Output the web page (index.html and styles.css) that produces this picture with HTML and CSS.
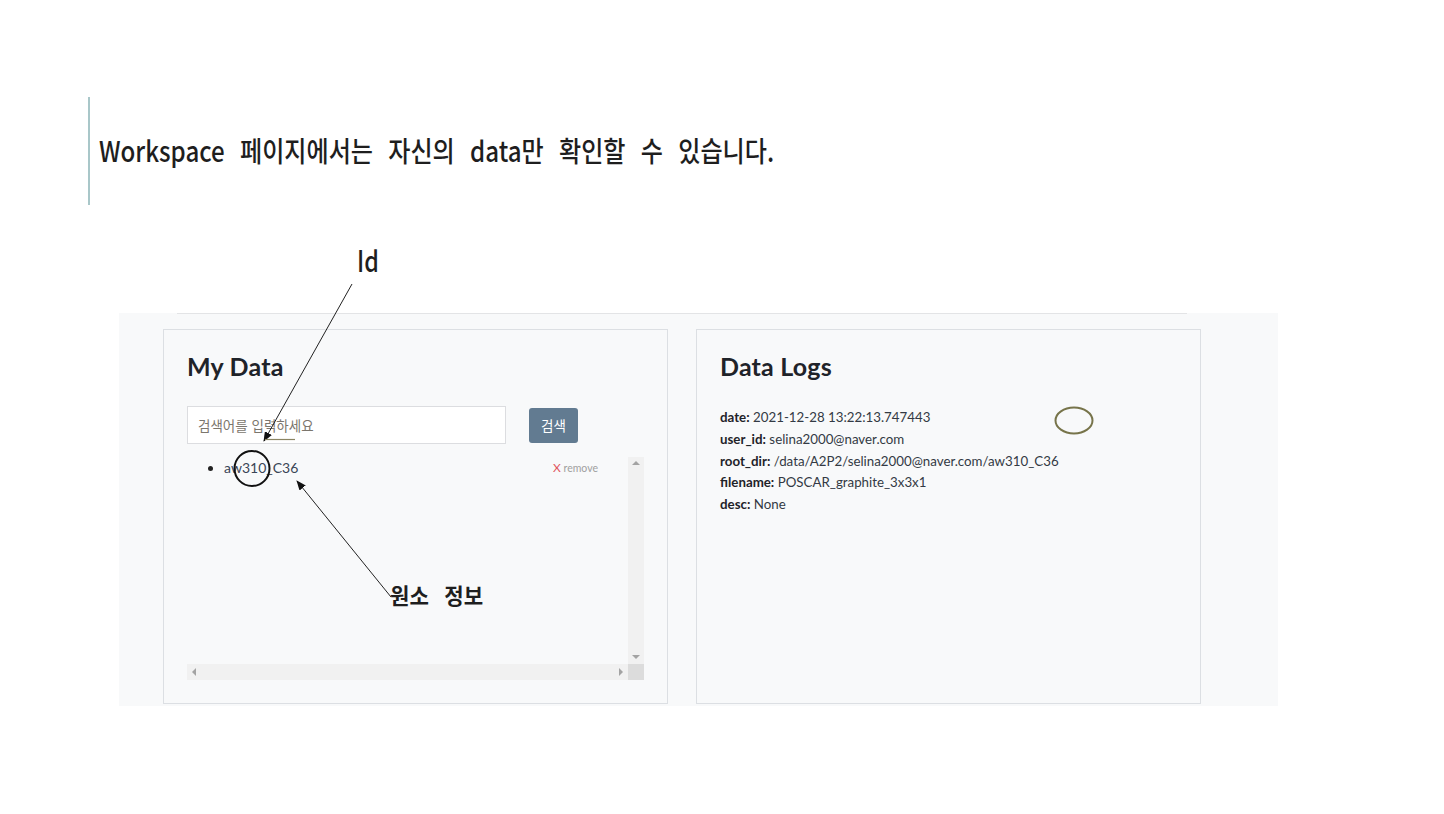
FILE: index.html
```html
<!DOCTYPE html>
<html lang="ko">
<head>
<meta charset="utf-8">
<title>Workspace</title>
<link rel="stylesheet" href="styles.css">
</head>
<body>
<header class="slide-title">
  <h1><span class="title-text">Workspace 페이지에서는 자신의 data만 확인할 수 있습니다.</span></h1>
</header>

<section class="app">
  <div class="app-rule"></div>
  <div class="cards">
    <div class="card">
      <h2 class="card-title">My Data</h2>
      <div class="search-row">
        <input class="search-input" type="text" placeholder="검색어를 입력하세요">
        <button class="search-btn">검색</button>
      </div>
      <div class="scroll-box">
        <div class="scroll-content">
          <ul class="data-list">
            <li><a class="remove"><span class="remove-x">X</span> remove</a><span class="item-name">aw310_C36</span></li>
          </ul>
        </div>
        <div class="vscroll"><span class="arr arr-up"></span><span class="arr arr-down"></span></div>
        <div class="hscroll"><span class="arr arr-left"></span><span class="arr arr-right"></span></div>
        <div class="corner"></div>
      </div>
    </div>
    <div class="card">
      <h2 class="card-title">Data Logs</h2>
      <div class="logs">
        <p><b>date:</b> 2021-12-28 13:22:13.747443</p>
        <p><b>user_id:</b> selina2000@naver.com</p>
        <p><b>root_dir:</b> /data/A2P2/selina2000@naver.com/aw310_C36</p>
        <p><b>filename:</b> POSCAR_graphite_3x3x1</p>
        <p><b>desc:</b> None</p>
      </div>
    </div>
  </div>
</section>

<div class="label label-id">Id</div>
<div class="label label-elem">원소 정보</div>

<svg class="annot" width="1444" height="814" viewBox="0 0 1444 814">
  <defs>
    <marker id="ah" markerWidth="10" markerHeight="8" refX="9" refY="4" orient="auto" markerUnits="userSpaceOnUse">
      <path d="M0,0 L10,4 L0,8 Z" fill="#111"/>
    </marker>
  </defs>
  <line x1="352" y1="284" x2="264" y2="441" stroke="#222" stroke-width="1" marker-end="url(#ah)"/>
  <line x1="265" y1="439.5" x2="295" y2="439.5" stroke="#8a8462" stroke-width="1.2"/>
  <line x1="391" y1="597" x2="297" y2="481" stroke="#222" stroke-width="1" marker-end="url(#ah)"/>
  <circle cx="252" cy="468.5" r="17.5" fill="none" stroke="#111" stroke-width="2"/>
  <ellipse cx="1074" cy="420.5" rx="18.5" ry="13" fill="none" stroke="#77744a" stroke-width="2"/>
</svg>
</body>
</html>
```

FILE: styles.css
```css
html, body {
  margin: 0;
  padding: 0;
}
body {
  width: 1444px;
  height: 814px;
  background: #ffffff;
  position: relative;
  overflow: hidden;
  font-family: "Lato", "Noto Sans CJK KR", sans-serif;
}

/* slide title */
.slide-title {
  margin: 97px 0 0 88px;
  height: 108px;
  border-left: 2px solid #a9c7c9;
  display: flex;
  align-items: center;
}
.slide-title h1 {
  margin: -2px 0 0 9px;
  font-weight: 500;
  font-size: 28px;
  line-height: 1;
  color: #1e1e1e;
  font-family: "Noto Sans CJK KR", "Noto Sans", sans-serif;
  white-space: nowrap;
}
.title-text {
  display: inline-block;
  transform: scaleX(0.86);
  transform-origin: left center;
  word-spacing: 10px;
}

/* app screenshot */
.app {
  margin: 108px 0 0 119px;
  width: 1159px;
  height: 393px;
  background: #f8f9fa;
  display: flex;
  flex-direction: column;
}
.app-rule {
  margin-left: 58px;
  width: 1010px;
  height: 1px;
  background: #e3e4e6;
}
.cards {
  display: flex;
  gap: 28px;
  margin: 15px 0 0 44px;
}
.card {
  border: 1px solid #dcdfe3;
  padding: 0 23px;
  box-sizing: border-box;
  width: 505px;
  height: 375px;
}
.card-title {
  margin: 20px 0 0 0;
  font-size: 25px;
  font-weight: 700;
  color: #1f2329;
  line-height: 32px;
  letter-spacing: 0.2px;
}

.search-row {
  display: flex;
  align-items: center;
  gap: 23px;
  margin-top: 24px;
}
.search-input {
  width: 319px;
  height: 38px;
  box-sizing: border-box;
  border: 1px solid #dcdde0;
  background: #fff;
  padding: 0 10px;
  font-family: "Noto Sans CJK KR", sans-serif;
  font-size: 13.5px;
  color: #333;
  outline: none;
}
.search-input::placeholder {
  color: #7b766d;
}
.search-btn {
  width: 49px;
  height: 35px;
  border: none;
  border-radius: 3px;
  background: #627b91;
  color: #fff;
  font-family: "Noto Sans CJK KR", sans-serif;
  font-size: 13.5px;
  padding: 0;
}

.scroll-box {
  margin-top: 13px;
  display: grid;
  grid-template-columns: 441px 16px;
  grid-template-rows: 207px 16px;
  width: 457px;
}
.scroll-content {
  overflow: hidden;
}
.data-list {
  margin: 0;
  padding: 0 30px 0 37px;
  font-size: 14px;
  line-height: 22px;
  color: #3a4556;
}
.data-list li {
  list-style: disc;
}
.data-list li::marker {
  color: #222;
}
.remove {
  float: right;
  font-size: 10.5px;
  color: #a0a0a0;
}
.remove-x {
  color: #e0565e;
  font-size: 12px;
}
.vscroll, .hscroll {
  background: #f1f1f1;
  position: relative;
}
.corner {
  background: #dcdcdc;
}
.arr {
  position: absolute;
  width: 0;
  height: 0;
  border: 4px solid transparent;
}
.arr-up {
  top: 4px;
  left: 4px;
  border-top-width: 0;
  border-bottom: 4px solid #a3a3a3;
}
.arr-down {
  bottom: 5px;
  left: 4px;
  border-bottom-width: 0;
  border-top: 4px solid #a3a3a3;
}
.arr-left {
  left: 5px;
  top: 4px;
  border-left-width: 0;
  border-right: 4px solid #a3a3a3;
}
.arr-right {
  right: 5px;
  top: 4px;
  border-right-width: 0;
  border-left: 4px solid #a3a3a3;
}

.logs {
  margin-top: 25px;
  font-size: 13.3px;
  line-height: 21.8px;
  color: #333a44;
}
.logs p {
  margin: 0;
}
.logs b {
  color: #1f2329;
  font-weight: 700;
}

/* annotation overlay */
.label {
  position: absolute;
  font-family: "Noto Sans CJK KR", sans-serif;
  color: #1e1e1e;
  white-space: nowrap;
  line-height: 1;
  transform-origin: left top;
}
.label-id {
  left: 357px;
  top: 245px;
  font-size: 29px;
  font-weight: 500;
  transform: scaleX(0.8);
}
.label-elem {
  left: 390px;
  top: 583px;
  font-size: 22px;
  font-weight: 700;
  word-spacing: 10px;
  transform: scaleX(0.96);
}
.annot {
  position: absolute;
  left: 0;
  top: 0;
  pointer-events: none;
}
```
